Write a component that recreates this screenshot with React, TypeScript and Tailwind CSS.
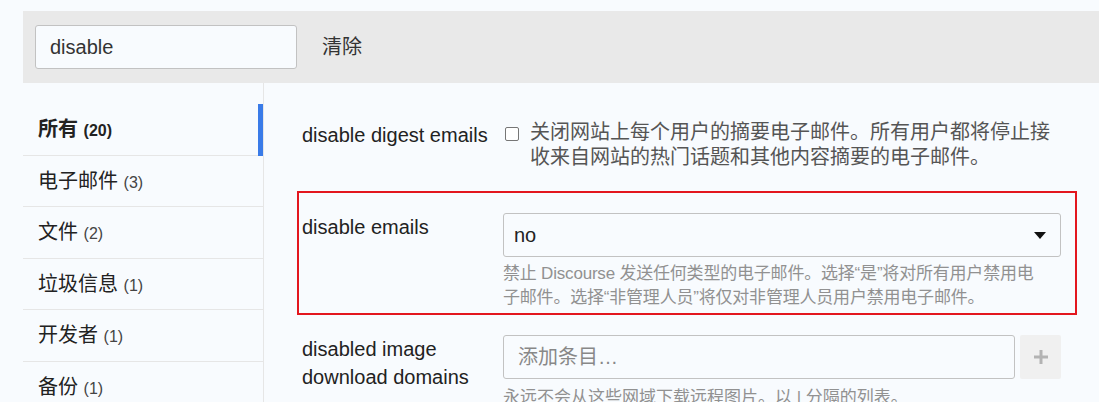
import React from "react";

const font = { fontFamily: '"Liberation Sans", Arial, "Noto Sans CJK SC", sans-serif' };

const cats: { name: string; count: number; active?: boolean }[] = [
  { name: "所有", count: 20, active: true },
  { name: "电子邮件", count: 3 },
  { name: "文件", count: 2 },
  { name: "垃圾信息", count: 1 },
  { name: "开发者", count: 1 },
  { name: "备份", count: 1 },
];

export default function App() {
  return (
    <div className="w-[1099px] h-[402px] overflow-hidden bg-[#f8fbfe] text-[#222222]" style={font}>
      <div className="ml-[23px] pt-[11px]">
        {/* top bar */}
        <div className="h-[72px] bg-[#e9e9e9] flex items-center pl-[12px]">
          <div className="w-[262px] h-[44px] border border-[#c2c2c2] rounded-[3px] bg-[#f8fbfe] flex items-center pl-[14px] text-[20px] text-[#333333]">
            disable
          </div>
          <div className="ml-[25px] text-[20px] text-[#333333]">清除</div>
        </div>

        <div className="flex">
          {/* sidebar */}
          <div className="w-[241px] shrink-0 border-r border-[#e6e6e6] pt-[21px] h-[330px]">
            {cats.map((c) => (
              <div
                key={c.name}
                className="relative h-[51.5px] border-b border-[#e6e6e6] flex items-center pl-[15px]"
              >
                {c.active ? (
                  <span className="font-bold text-[20px] leading-none">
                    {c.name} <span className="text-[16px]">({c.count})</span>
                  </span>
                ) : (
                  <span className="text-[20px] leading-none text-[#222222]">
                    {c.name} <span className="text-[16px] text-[#444444]">({c.count})</span>
                  </span>
                )}
                {c.active && <div className="absolute right-0 top-0 bottom-[-1px] w-[5px] bg-[#3a7be8]" />}
              </div>
            ))}
          </div>

          {/* content */}
          <div className="flex-1 pl-[33px] pr-[22px] pt-[37px]">
            {/* row 1 */}
            <div className="flex border-2 border-transparent pl-[3px] pr-[14px] mt-[-2px]">
              <div className="w-[201px] shrink-0 pt-[3px] text-[20px] leading-[25px]">disable digest emails</div>
              <div className="flex-1 flex">
                <div className="ml-[2px] mt-[7px] w-[14px] h-[14px] border border-[#767676] rounded-[2px] bg-white shrink-0" />
                <div className="ml-[11px] text-[20px] leading-[25px] text-[#555555]">
                  <div className="whitespace-nowrap">关闭网站上每个用户的摘要电子邮件。所有用户都将停止接</div>
                  <div className="whitespace-nowrap">收来自网站的热门话题和其他内容摘要的电子邮件。</div>
                </div>
              </div>
            </div>

            {/* row 2 - highlighted */}
            <div className="mt-[19px] flex border-2 border-[#e3161e] pl-[3px] pr-[14px] pt-[20px] pb-[3px]">
              <div className="w-[201px] shrink-0 pt-[2px] text-[20px] leading-[25px]">disable emails</div>
              <div className="flex-1">
                <div className="h-[44px] border border-[#c2c2c2] rounded-[3px] bg-[#f8fbfe] flex items-center justify-between pl-[10px] pr-[14px] text-[20px]">
                  <span>no</span>
                  <svg width="12" height="7" viewBox="0 0 12 7">
                    <path d="M0 0 L12 0 L6 7 Z" fill="#111111" />
                  </svg>
                </div>
                <div className="mt-[5px] text-[17px] leading-[24px] text-[#919191] tracking-[-0.2px]">
                  <div className="whitespace-nowrap">禁止 Discourse 发送任何类型的电子邮件。选择“是”将对所有用户禁用电</div>
                  <div className="whitespace-nowrap">子邮件。选择“非管理人员”将仅对非管理人员用户禁用电子邮件。</div>
                </div>
              </div>
            </div>

            {/* row 3 */}
            <div className="mt-[18px] flex border-2 border-transparent pl-[3px] pr-[14px]">
              <div className="w-[201px] shrink-0 text-[20px] leading-[28px]">
                disabled image
                <br />
                download domains
              </div>
              <div className="flex-1">
                <div className="flex gap-[5px]">
                  <div className="flex-1 h-[44px] border border-[#c2c2c2] rounded-[3px] bg-[#f8fbfe] flex items-center pl-[14px] text-[20px] text-[#888888]">
                    添加条目…
                  </div>
                  <div className="w-[41px] h-[44px] bg-[#f0f0f0] rounded-[2px] flex items-center justify-center">
                    <svg width="16" height="16" viewBox="0 0 16 16">
                      <path d="M8 1 V15 M1 8 H15" stroke="#b3b3b3" strokeWidth="3" />
                    </svg>
                  </div>
                </div>
                <div className="mt-[7px] text-[17px] leading-[24px] text-[#919191] whitespace-nowrap">
                  永远不会从这些网域下载远程图片。以 | 分隔的列表。
                </div>
              </div>
            </div>
          </div>
        </div>
      </div>
    </div>
  );
}
